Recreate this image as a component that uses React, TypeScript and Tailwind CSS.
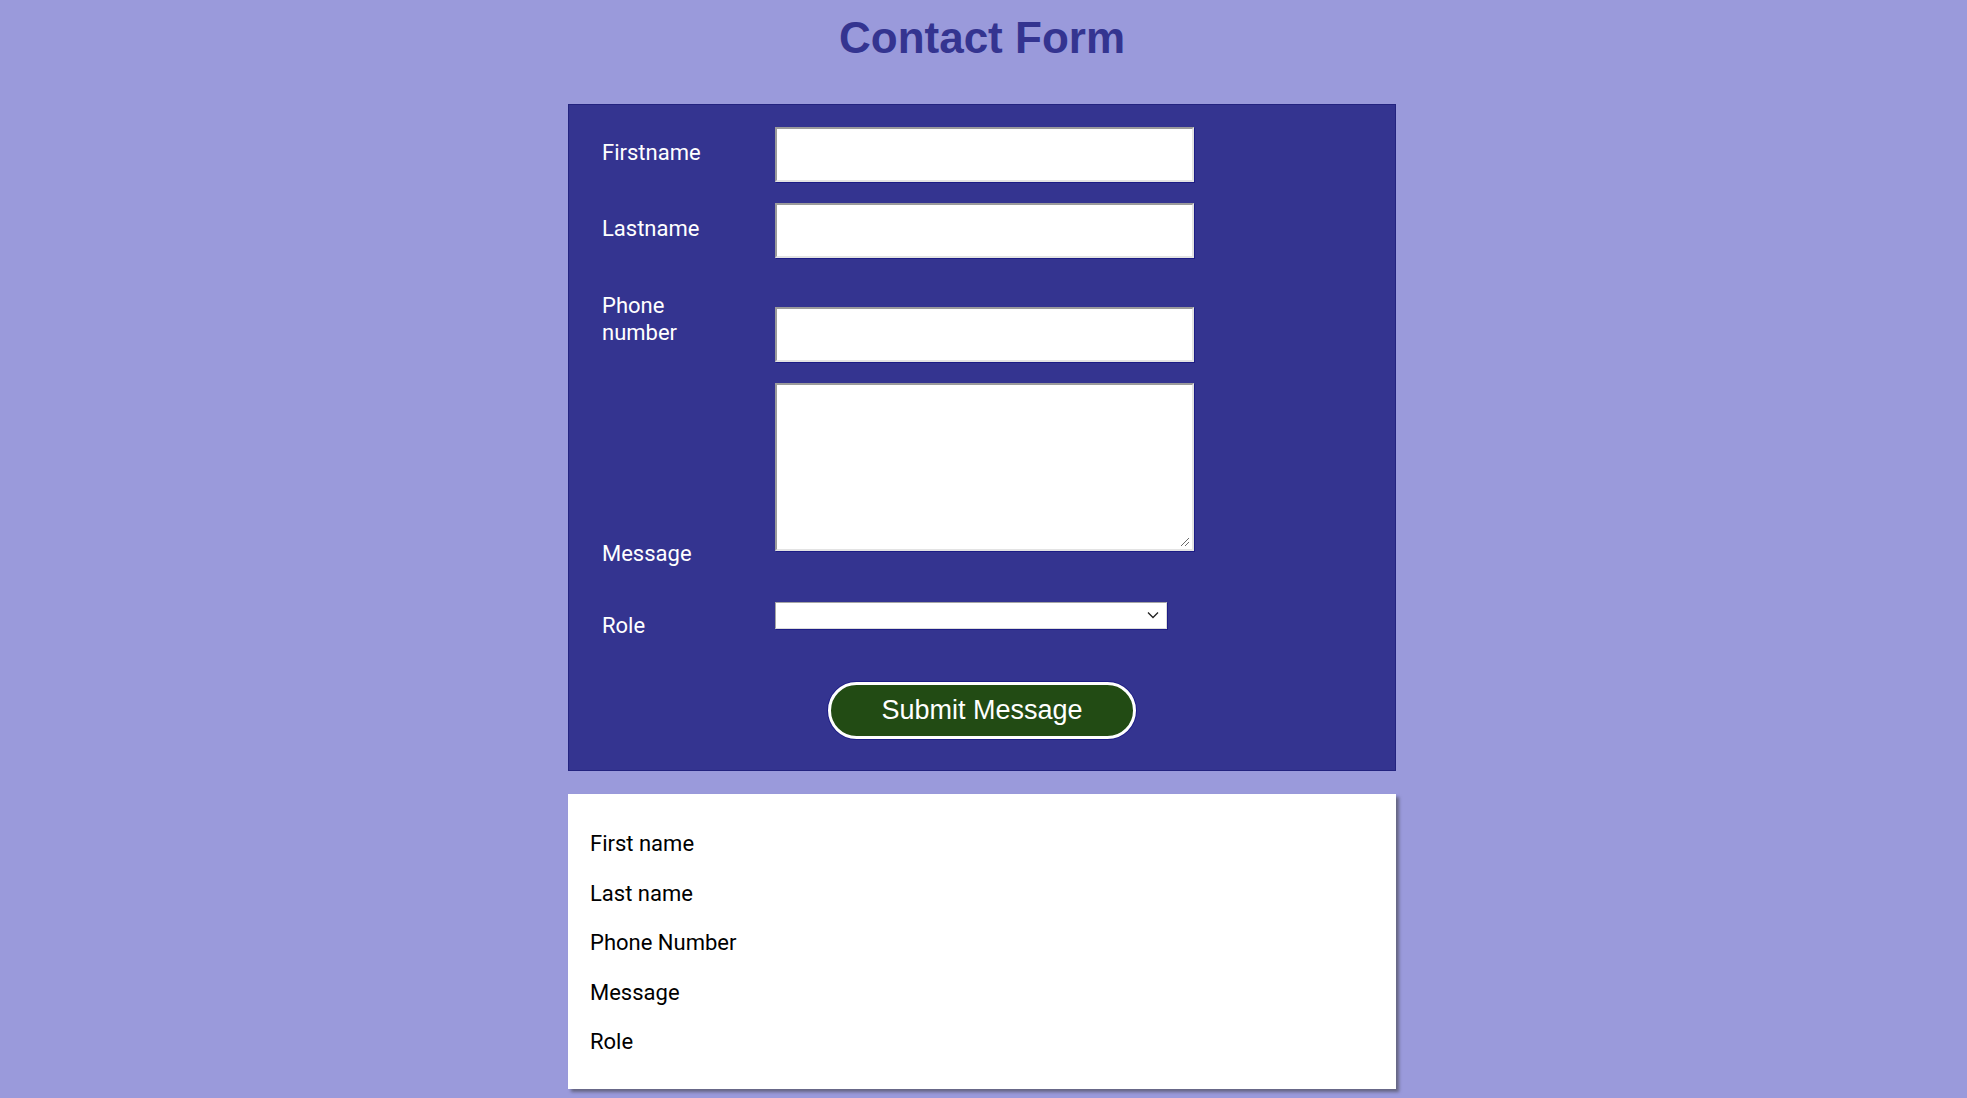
import React from "react";

function Label({ children, className = "" }: { children: React.ReactNode; className?: string }) {
  return (
    <label className={`w-[173px] shrink-0 text-[22px] text-white ${className}`}>{children}</label>
  );
}

const inputCls =
  "h-[55px] w-[419px] bg-white border-2 border-t-[#9b9b9b] border-l-[#9b9b9b] border-b-[#e3e3e3] border-r-[#e3e3e3] shadow-[1px_1px_0_#1c1c85] outline-none";

export default function App() {
  return (
    <div
      className="min-h-screen w-full bg-[#9a9adb] flex flex-col items-center"
      style={{ fontFamily: "Roboto, 'Noto Sans', sans-serif" }}
    >
      <h1 className="mt-[12px] mb-[41px] mr-[3px] text-[44px] leading-[51px] font-bold text-[#343490] [font-family:'Liberation_Sans',Arial,sans-serif]">
        Contact Form
      </h1>

      <form className="mr-[3px] w-[828px] bg-[#343490] border border-[#23237f] pl-[33px] pt-[22px] pb-[31px] flex flex-col">
        <div className="flex items-start">
          <Label className="mt-[13px] leading-[26px]">Firstname</Label>
          <input className={inputCls} />
        </div>
        <div className="flex items-start mt-[21px]">
          <Label className="mt-[13px] leading-[26px]">Lastname</Label>
          <input className={inputCls} />
        </div>
        <div className="flex items-start mt-[34px]">
          <Label className="leading-[27px]">
            Phone
            <br />
            number
          </Label>
          <input className={`${inputCls} mt-[15px]`} />
        </div>
        <div className="flex items-start mt-[21px]">
          <Label className="mt-[158px] leading-[26px]">Message</Label>
          <div className="relative">
            <textarea className="block h-[168px] w-[419px] resize-none bg-white border-2 border-t-[#9b9b9b] border-l-[#9b9b9b] border-b-[#e3e3e3] border-r-[#e3e3e3] shadow-[1px_1px_0_#1c1c85] outline-none" />
            <svg className="absolute right-[4px] bottom-[4px]" width="10" height="10" viewBox="0 0 10 10">
              <line x1="1" y1="9" x2="9" y2="1" stroke="#6b6b6b" strokeWidth="1" />
              <line x1="5" y1="9" x2="9" y2="5" stroke="#6b6b6b" strokeWidth="1" />
            </svg>
          </div>
        </div>
        <div className="flex items-start mt-[35px]">
          <Label className="mt-[11px] leading-[26px]">Role</Label>
          <div className="relative h-[27px] w-[392px] bg-white border border-t-[#a5a5a5] border-l-[#a5a5a5] border-b-[#dcdcdc] border-r-[#dcdcdc] shadow-[1px_1px_0_#1c1c85]">
            <svg className="absolute right-[7px] top-[8px]" width="12" height="8" viewBox="0 0 12 8">
              <path d="M1 1.5 L6 6.5 L11 1.5" fill="none" stroke="#222" strokeWidth="1.3" />
            </svg>
          </div>
        </div>
        <div className="flex justify-center mt-[43px] pr-[33px]">
          <button
            type="button"
            className="h-[57px] w-[308px] rounded-full bg-[#224b14] border-[3px] border-white shadow-[0_0_0_1px_#1c1c85] text-white text-[27px] [font-family:'Liberation_Sans',Arial,sans-serif]"
          >
            Submit Message
          </button>
        </div>
      </form>

      <div className="mr-[3px] mt-[23px] w-[828px] bg-white shadow-[3px_3px_3px_rgba(60,60,60,0.55)] pl-[22px] pt-[25px] pb-[22px] flex flex-col text-[22px] leading-[49.5px] text-black">
        <div>First name</div>
        <div>Last name</div>
        <div>Phone Number</div>
        <div>Message</div>
        <div>Role</div>
      </div>
    </div>
  );
}
